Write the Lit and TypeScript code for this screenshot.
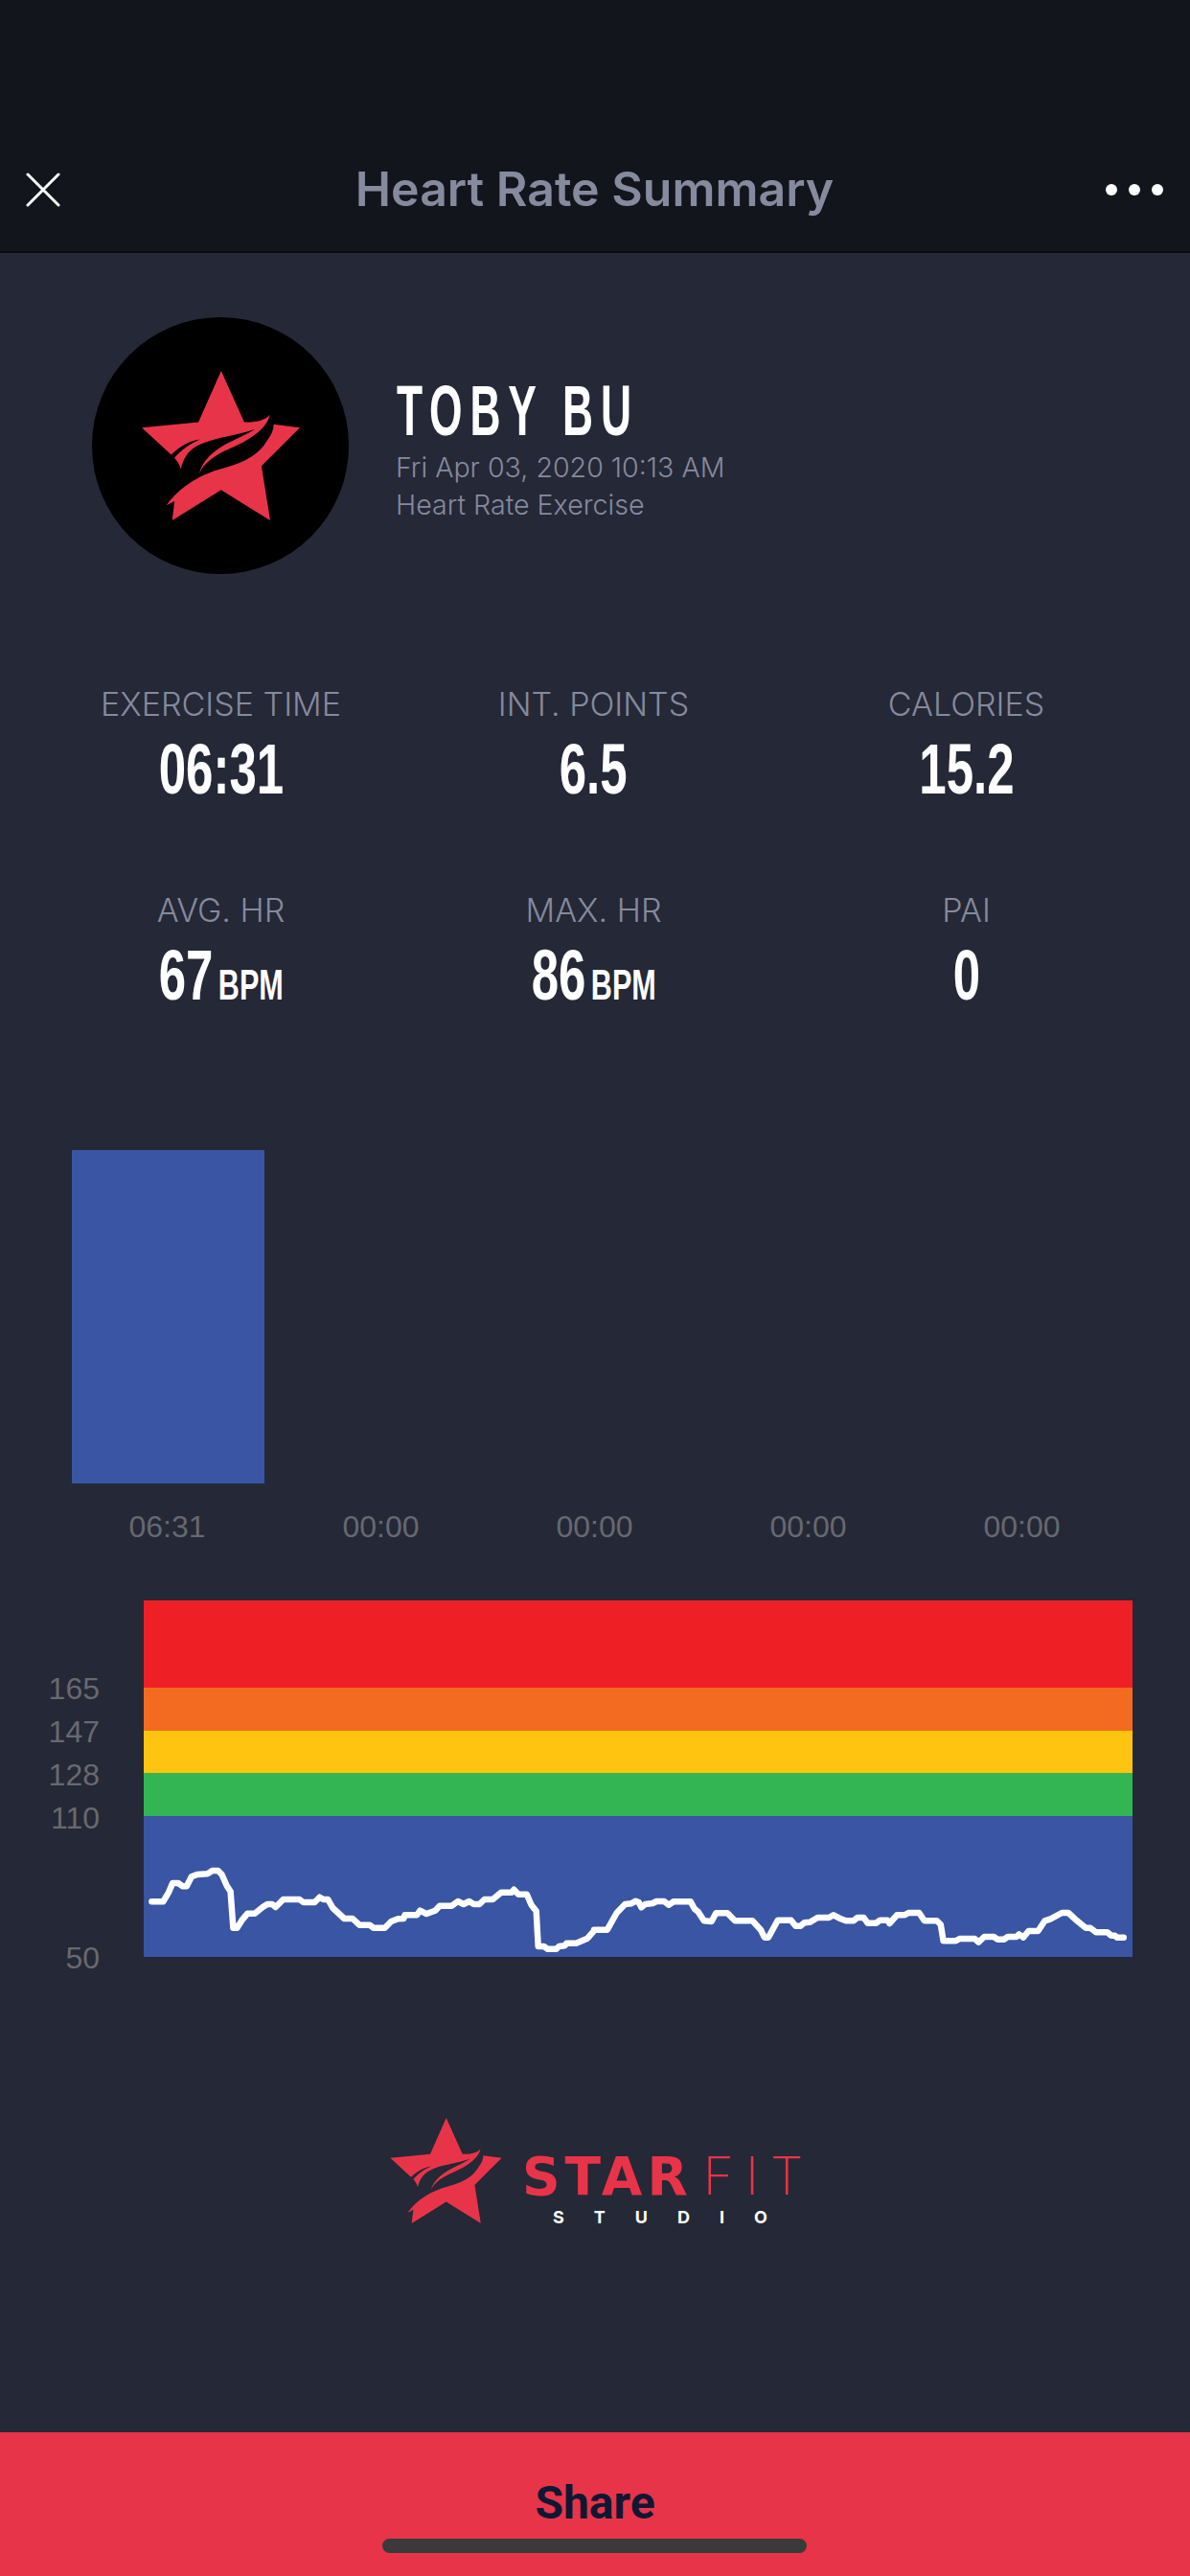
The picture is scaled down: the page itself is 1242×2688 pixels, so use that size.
import { LitElement, html, css, svg } from "lit";
import { customElement } from "lit/decorators.js";

const STAR_A = "M511 263L583 423C615 425 650 418 663 400C655 440 610 475 540 505C495 525 455 550 443 585C450 545 490 510 530 490C560 475 590 462 617 445C560 465 490 470 440 495C405 512 392 540 385 570C380 550 372 545 365 535C385 510 415 490 445 477C410 482 380 500 355 525L263 440L440 423Z";
const STAR_B = "M675 430L757 440L637 560L664 730L511 635L358 730L365 670L340 683C370 640 420 600 490 575C560 555 620 540 655 480C670 460 675 445 675 430Z";

const TRACE_L: number[][] = [[350,370],[380,370],[395,340],[405,312],[420,312],[432,322],[442,322],[455,292],[470,285],[497,283],[510,273],[525,273],[535,285],[548,320],[558,338],[565,452],[575,452],[588,428],[603,407],[622,407],[642,388],[655,378],[668,378],[677,387],[697,363],[740,363],[750,372],[780,372],[793,356],[803,363],[815,363],[828,390],[858,423],[880,423],[898,443],[925,443],[935,452],[965,452],[982,432],[1000,424],[1015,423],[1018,412],[1050,412],[1058,398],[1075,408],[1098,398],[1110,383],[1142,383],[1158,369],[1173,378],[1188,369],[1200,378],[1215,378],[1228,363],[1250,363],[1272,341],[1300,341],[1306,332],[1318,347],[1340,347],[1352,380],[1365,400],[1370,510],[1385,510],[1395,518],[1418,518],[1425,510],[1440,508],[1445,500],[1470,500],[1500,485],[1520,458]];
const TRACE_R: number[][] = [[0,458],[35,458],[60,405],[82,378],[98,376],[110,368],[118,372],[125,388],[135,378],[155,375],[165,369],[185,369],[197,380],[210,370],[255,370],[265,392],[275,402],[290,430],[310,432],[322,406],[352,406],[372,430],[418,430],[440,458],[450,482],[460,482],[485,428],[520,428],[532,446],[545,446],[555,436],[570,434],[590,420],[620,420],[632,412],[648,422],[665,430],[685,430],[695,420],[712,420],[722,437],[745,437],[755,428],[775,428],[780,438],[800,412],[820,412],[830,405],[858,405],[872,430],[905,430],[915,442],[922,493],[955,493],[965,486],[1005,486],[1015,497],[1030,480],[1055,480],[1065,488],[1082,488],[1092,480],[1115,480],[1122,472],[1133,482],[1147,462],[1172,462],[1190,430],[1205,424],[1235,405],[1252,405],[1275,430],[1298,452],[1310,452],[1325,466],[1355,466],[1365,476],[1375,476],[1380,482],[1398,482]];

const K = 620 / 1568;
const traceD = [
  ...TRACE_L.map(([x, y]) => [20 + x * K - 150, 1860 + y / 3 - 1669]),
  ...TRACE_R.map(([x, y]) => [620 + x * K - 150, 1860 + y / 3 - 1669]),
].map(([x, y]) => `${x.toFixed(1)},${y.toFixed(1)}`).join(" ");

const star = (w: number, h: number) => html`<svg class="star" width=${w} height=${h} viewBox="263 263 494 467">
  ${svg`<path d=${STAR_A} fill="#e83449"/><path d=${STAR_B} fill="#e83449"/>`}
</svg>`;

@customElement("app-root")
export class AppRoot extends LitElement {
  static styles = css`
    :host { display: flex; flex-direction: column; width: 1242px; height: 2688px; background: #252836; font-family: Inter, "Liberation Sans", sans-serif; overflow: hidden; }
    .header { height: 264px; box-sizing: border-box; padding: 132px 28px 0 27px; background: #13151c; border-bottom: 2px solid #0c0d12; display: grid; grid-template-columns: 1fr auto 1fr; align-items: center; }
    .close { display: block; }
    .title { font-size: 50px; font-weight: 600; color: #858a9f; height: 132px; line-height: 130px; letter-spacing: 0; }
    .dots { display: flex; gap: 12px; justify-content: flex-end; }
    .dots i { width: 12px; height: 12px; border-radius: 50%; background: #fff; }

    .profile { display: flex; align-items: center; gap: 49px; padding: 67px 0 0 96px; }
    .avatar { width: 268px; height: 268px; border-radius: 50%; background: #000; display: flex; align-items: center; justify-content: center; }
    .who { display: flex; flex-direction: column; }
    .name { font-family: "Liberation Sans", sans-serif; font-weight: 700; font-size: 74px; line-height: 84px; letter-spacing: 13px; color: #fff; transform: scaleX(.6); transform-origin: left center; white-space: nowrap; margin: 2px 0 -3px 1px; }
    .sub { font-size: 28.6px; font-weight: 300; line-height: 39px; color: #858a9f; white-space: nowrap; }

    .stats { display: grid; grid-template-columns: repeat(3, 389px); grid-auto-rows: 215px; padding: 114px 0 0 36px; }
    .stat { display: flex; flex-direction: column; align-items: center; }
    .label { font-size: 34px; font-weight: 300; line-height: 44px; color: #858a9f; white-space: nowrap; }
    .value { display: flex; align-items: baseline; gap: 8px; font-family: "Liberation Sans", sans-serif; font-weight: 700; font-size: 75px; line-height: 84px; color: #fff; transform: scaleX(.68); margin-top: 3px; }
    .value small { font-size: 45px; font-weight: 700; }

    .bars { margin-top: 57px; }
    .bar-area { height: 348px; padding-left: 75px; }
    .bar { width: 201px; height: 348px; background: #3955a3; }
    .bar-labels { display: grid; grid-template-columns: repeat(5, 223px); padding: 27px 0 0 63px; }
    .bar-labels span { text-align: center; font-family: "Liberation Sans", sans-serif; font-size: 32px; line-height: 36px; color: #666871; }

    .hr { display: flex; margin-top: 59px; }
    .ticks { width: 104px; height: 372px; position: relative; font-family: "Liberation Sans", sans-serif; font-size: 32px; line-height: 36px; color: #68696f; margin-right: 46px; flex: none; }
    .ticks span { position: absolute; right: 0; }
    .zones { width: 1032px; height: 372px; position: relative; display: flex; flex-direction: column; }
    .z1 { height: 90.5px; background: #ef1f26; }
    .z2 { height: 45px; background: #f36b21; }
    .z3 { height: 44.5px; background: #ffc40f; }
    .z4 { height: 45px; background: #33b553; }
    .z5 { flex: 1; background: #3955a3; }
    .trace { position: absolute; inset: 0; }

    .logo { display: flex; gap: 23px; margin: 168px 0 0 407px; }
    .logo-text { display: flex; flex-direction: column; padding-top: 30px; }
    .starfit { font-size: 55px; line-height: 60px; color: #e83449; white-space: nowrap; }
    .starfit b { font-family: "DejaVu Sans", sans-serif; font-weight: 700; letter-spacing: 5px; margin-left: -2px; }
    .starfit span { font-weight: 200; letter-spacing: 12px; margin-left: 11px; }
    .studio { font-size: 18px; font-weight: 700; line-height: 22px; letter-spacing: 31px; color: #fff; padding-left: 30px; margin-top: 2px; white-space: nowrap; }

    .share { margin-top: auto; height: 150px; background: #e83449; position: relative; display: flex; justify-content: center; box-sizing: border-box; padding-top: 46px; }
    .share span { font-family: Roboto, "Liberation Sans", sans-serif; font-weight: 700; font-size: 48px; line-height: 56px; color: #0f1833; }
    .home { position: absolute; left: 399px; top: 111px; width: 443px; height: 15px; border-radius: 8px; background: #3a3a3a; }
  `;

  render() {
    const stats = [
      ["EXERCISE TIME", "06:31", ""], ["INT. POINTS", "6.5", ""], ["CALORIES", "15.2", ""],
      ["AVG. HR", "67", "BPM"], ["MAX. HR", "86", "BPM"], ["PAI", "0", ""],
    ];
    const ticks: [string, number][] = [["165", 74], ["147", 119], ["128", 164], ["110", 209], ["50", 355]];
    return html`
      <div class="header">
        <svg class="close" width="36" height="36" viewBox="0 0 36 36"><path d="M2 2L34 34M34 2L2 34" stroke="#fff" stroke-width="3" stroke-linecap="round"/></svg>
        <div class="title">Heart Rate Summary</div>
        <div class="dots"><i></i><i></i><i></i></div>
      </div>
      <div class="profile">
        <div class="avatar">${star(165, 156)}</div>
        <div class="who">
          <div class="name">TOBY BU</div>
          <div class="sub">Fri Apr 03, 2020 10:13 AM</div>
          <div class="sub">Heart Rate Exercise</div>
        </div>
      </div>
      <div class="stats">
        ${stats.map(([l, v, u]) => html`<div class="stat">
          <div class="label">${l}</div>
          <div class="value">${v}${u ? html`<small>${u}</small>` : ""}</div>
        </div>`)}
      </div>
      <div class="bars">
        <div class="bar-area"><div class="bar"></div></div>
        <div class="bar-labels">
          ${["06:31", "00:00", "00:00", "00:00", "00:00"].map((t) => html`<span>${t}</span>`)}
        </div>
      </div>
      <div class="hr">
        <div class="ticks">
          ${ticks.map(([t, y]) => html`<span style="top:${y}px">${t}</span>`)}
        </div>
        <div class="zones">
          <div class="z1"></div><div class="z2"></div><div class="z3"></div><div class="z4"></div><div class="z5"></div>
          <svg class="trace" width="1032" height="372" viewBox="0 0 1032 372">
            <polyline points=${traceD} fill="none" stroke="#fff" stroke-width="6.5" stroke-linejoin="round" stroke-linecap="round"/>
          </svg>
        </div>
      </div>
      <div class="logo">
        ${star(117, 110)}
        <div class="logo-text">
          <div class="starfit"><b>STAR</b><span>FIT</span></div>
          <div class="studio">STUDIO</div>
        </div>
      </div>
      <div class="share"><span>Share</span><div class="home"></div></div>
    `;
  }
}
